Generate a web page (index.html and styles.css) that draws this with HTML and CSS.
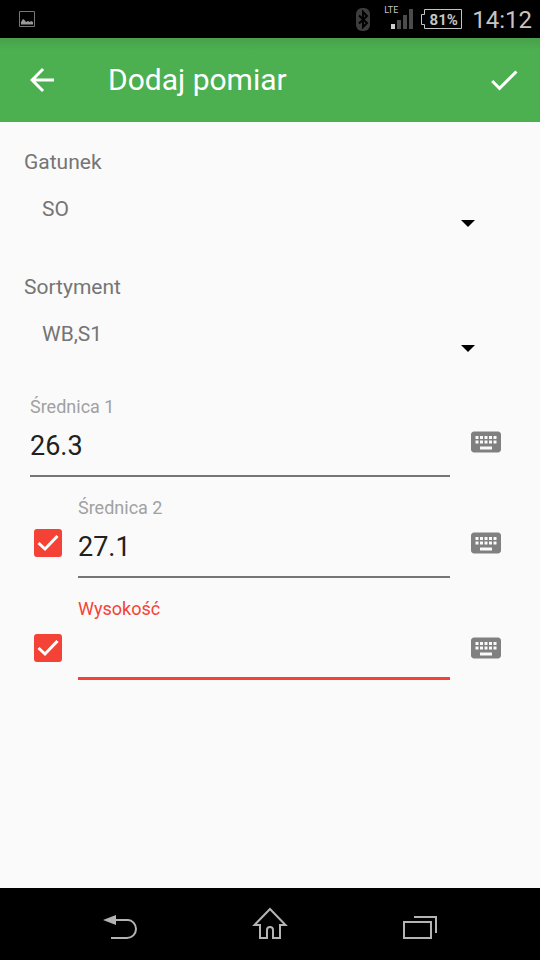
FILE: index.html
```html
<!DOCTYPE html>
<html lang="pl">
<head>
<meta charset="utf-8">
<meta name="viewport" content="width=device-width, initial-scale=1">
<title>Dodaj pomiar</title>
<link rel="stylesheet" href="styles.css">
</head>
<body>
<svg hidden>
  <symbol id="keyboard" viewBox="0 0 24 24"><path d="M20 5H4c-1.100 0-1.990.9-1.990 2L2 17c0 1.100.9 2 2 2h16c1.100 0 2-.9 2-2V7c0-1.100-.9-2-2-2zm-9 3h2v2h-2V8zm0 3h2v2h-2v-2zM8 8h2v2H8V8zm0 3h2v2H8v-2zm-1 2H5v-2h2v2zm0-3H5V8h2v2zm9 7H8v-2h8v2zm0-4h-2v-2h2v2zm0-3h-2V8h2v2zm3 3h-2v-2h2v2zm0-3h-2V8h2v2z"/></symbol>
  <symbol id="check" viewBox="0 0 24 24"><path d="M9 16.170L4.830 12l-1.420 1.410L9 19 21 7l-1.410-1.410z"/></symbol>
  <symbol id="tick" viewBox="0 0 28 28"><path d="M4.500 14l6.500 6L23.500 7" fill="none" stroke="#fff" stroke-width="3"/></symbol>
</svg>
<div class="status">
  <svg class="status-picture" width="16" height="16" viewBox="0 0 16 16"><path d="M.5.5h15v15H.5z" fill="none" stroke="#777"/><path d="M2 13.500V11l2-3 1.500 1L7 11l2-1 2 1 1-1 2 1v2.500z" fill="#999"/></svg>
  <div class="status-right">
    <svg class="bluetooth" width="14" height="23" viewBox="0 0 14 23"><rect width="14" height="23" rx="6" fill="#3d3d3d"/><path d="M3 7.500l8 7.500-4 4V4l4 4-8 7.500" fill="none" stroke="#000" stroke-width="2"/></svg>
    <div class="signal">
      <span class="lte">LTE</span>
      <svg width="22" height="20" viewBox="0 0 22 20"><path d="M0 15h4v5H0z" fill="#ccc"/><path d="M6 11h4v9H6zM12 6h4v14h-4zM18 0h4v20h-4z" fill="#4b4b4b"/></svg>
    </div>
    <div class="battery">
      <svg class="battery-frame" width="41" height="20" viewBox="0 0 41 20"><path d="M3.500.5h37v19h-37v-4h-3v-10h3z" fill="none" stroke="#c4c4c4"/></svg>
      <span class="battery-level">81%</span>
    </div>
    <time class="clock">14:12</time>
  </div>
</div>
<header class="appbar">
  <button class="bar-button" type="button" aria-label="Wstecz"><svg width="36" height="36" viewBox="0 0 24 24"><path d="M20 11H7.830l5.590-5.590L12 4l-8 8 8 8 1.410-1.410L7.830 13H20v-2z"/></svg></button>
  <h1 class="title">Dodaj pomiar</h1>
  <button class="bar-button" type="submit" form="measure" aria-label="Zapisz"><svg width="36" height="36"><use href="#check"/></svg></button>
</header>
<main class="content">
  <form id="measure" class="form">
    <div class="choice">
      <label class="choice-label" for="species">Gatunek</label>
      <div class="spinner">
        <select id="species"><option>SO</option></select>
        <svg class="arrow" width="14" height="7" viewBox="0 0 14 7"><path d="M0 0h14L7 7z"/></svg>
      </div>
    </div>
    <div class="choice">
      <label class="choice-label" for="grade">Sortyment</label>
      <div class="spinner">
        <select id="grade"><option>WB,S1</option></select>
        <svg class="arrow" width="14" height="7" viewBox="0 0 14 7"><path d="M0 0h14L7 7z"/></svg>
      </div>
    </div>
    <div class="rows">
      <div class="row">
        <div class="field">
          <label for="d1">Średnica 1</label>
          <input id="d1" type="text" inputmode="decimal" value="26.3">
        </div>
        <button class="keys" type="button" aria-label="Klawiatura"><svg width="36" height="36"><use href="#keyboard"/></svg></button>
      </div>
      <div class="row">
        <label class="tick"><input type="checkbox" checked aria-label="Użyj: Średnica 2"><svg><use href="#tick"/></svg></label>
        <div class="field">
          <label for="d2">Średnica 2</label>
          <input id="d2" type="text" inputmode="decimal" value="27.1">
        </div>
        <button class="keys" type="button" aria-label="Klawiatura"><svg width="36" height="36"><use href="#keyboard"/></svg></button>
      </div>
      <div class="row row-active">
        <label class="tick"><input type="checkbox" checked aria-label="Użyj: Wysokość"><svg><use href="#tick"/></svg></label>
        <div class="field">
          <label for="height">Wysokość</label>
          <input id="height" type="text" inputmode="decimal">
        </div>
        <button class="keys" type="button" aria-label="Klawiatura"><svg width="36" height="36"><use href="#keyboard"/></svg></button>
      </div>
    </div>
  </form>
</main>
<nav class="navbar">
  <button type="button" aria-label="Cofnij"><svg width="36" height="36" viewBox="0 0 36 36"><path d="M12 14h14c4 0 8 4 8 9s-4 9-9 9H9" fill="none" stroke="#b4b4b4" stroke-width="2"/><path d="M1 14l13-5v10z" fill="#b4b4b4"/></svg></button>
  <button type="button" aria-label="Ekran główny"><svg width="36" height="36" viewBox="0 0 36 36"><path d="M18 3L2.500 19H8v13h7v-8c0-4 6-4 6 0v8h7V19h5.500z" fill="none" stroke="#b4b4b4" stroke-width="2"/></svg></button>
  <button type="button" aria-label="Ostatnie"><svg width="36" height="36" viewBox="0 0 36 36"><path d="M2 16h27v16H2zM12 11h22v16" fill="none" stroke="#b4b4b4" stroke-width="2"/></svg></button>
</nav>
</body>
</html>
```
FILE: styles.css
```css
* {
  box-sizing: border-box;
}

body {
  margin: 0;
  min-height: 100vh;
  display: flex;
  flex-direction: column;
  background: #fafafa;
  color: #757575;
  font-family: Roboto, "Liberation Sans", sans-serif;
}

button {
  display: flex;
  align-items: center;
  justify-content: center;
  padding: 0;
  border: 0;
  background: none;
  cursor: pointer;
}

svg {
  display: block;
}

svg[hidden] {
  display: none;
}

.status {
  display: flex;
  align-items: center;
  justify-content: space-between;
  height: 38px;
  padding: 0 8px 0 19px;
  background: #000;
  color: #c4c4c4;
}

.status-right {
  display: flex;
  align-items: center;
}

.bluetooth {
  margin-right: 21px;
}

.signal {
  position: relative;
  margin-right: 8px;
}

.lte {
  position: absolute;
  top: -5px;
  left: -7px;
  font-size: 9px;
  line-height: 12px;
}

.battery {
  position: relative;
  width: 41px;
  height: 20px;
  padding-left: 4px;
  margin-right: 10px;
  text-align: center;
}

.battery-frame {
  position: absolute;
  inset: 0;
}

.battery-level {
  display: block;
  font-size: 15px;
  font-weight: 700;
  line-height: 22px;
}

.clock {
  font-size: 24px;
  line-height: 28px;
  padding-top: 2px;
}

.appbar {
  display: flex;
  align-items: center;
  height: 84px;
  padding: 0 18px 0 24px;
  background: linear-gradient(#47a04a, #4caf50 12px);
  color: #fff;
}

.bar-button {
  height: 84px;
  fill: #fff;
}

.title {
  flex: 1;
  margin: 0 0 0 48px;
  font-size: 30px;
  font-weight: 400;
  line-height: 36px;
}

.content {
  flex: 1;
  padding: 28px 18px 28px 24px;
}

.form {
  display: flex;
  flex-direction: column;
  gap: 12px;
}

.choice {
  display: flex;
  flex-direction: column;
  gap: 11px;
}

.choice-label {
  font-size: 21px;
  line-height: 24px;
}

.spinner {
  position: relative;
}

.spinner select {
  display: block;
  width: 100%;
  height: 78px;
  padding: 12px 72px 42px 18px;
  border: 0;
  background: none;
  color: inherit;
  font: 21px/24px Roboto, "Liberation Sans", sans-serif;
  appearance: none;
}

.arrow {
  position: absolute;
  top: 35px;
  right: 47px;
  pointer-events: none;
}

.rows {
  display: flex;
  flex-direction: column;
  gap: 19px;
  padding-left: 6px;
  margin-top: -5px;
}

.row {
  display: flex;
  align-items: flex-end;
}

.field {
  flex: 1;
  min-width: 0;
}

.field label {
  display: block;
  color: #a1a1a1;
  font-size: 18px;
  line-height: 24px;
}

.field input {
  display: block;
  width: 100%;
  height: 58px;
  padding: 0 0 2px;
  border: 0;
  border-bottom: 2px solid #757575;
  border-radius: 0;
  outline: 0;
  background: none;
  color: #212121;
  font: 27px/32px Roboto, "Liberation Sans", sans-serif;
}

.keys {
  width: 72px;
  height: 70px;
  fill: #808080;
}

.tick {
  display: grid;
  place-items: center;
  width: 36px;
  height: 70px;
  margin-right: 12px;
}

.tick input,
.tick svg {
  grid-area: 1 / 1;
}

.tick input {
  width: 28px;
  height: 28px;
  margin: 0;
  border: 2px solid #757575;
  border-radius: 3px;
  appearance: none;
}

.tick input:checked {
  border-color: #f44336;
  background: #f44336;
}

.tick svg {
  width: 28px;
  height: 28px;
  pointer-events: none;
}

.tick input:not(:checked) + svg {
  visibility: hidden;
}

.row-active .field label {
  color: #f44336;
}

.row-active .field input {
  height: 59px;
  border-bottom: 3px solid #f44336;
}

.row-active .keys,
.row-active .tick {
  height: 64px;
}

.navbar {
  display: flex;
  justify-content: center;
  gap: 114px;
  height: 72px;
  background: #000;
}
```
